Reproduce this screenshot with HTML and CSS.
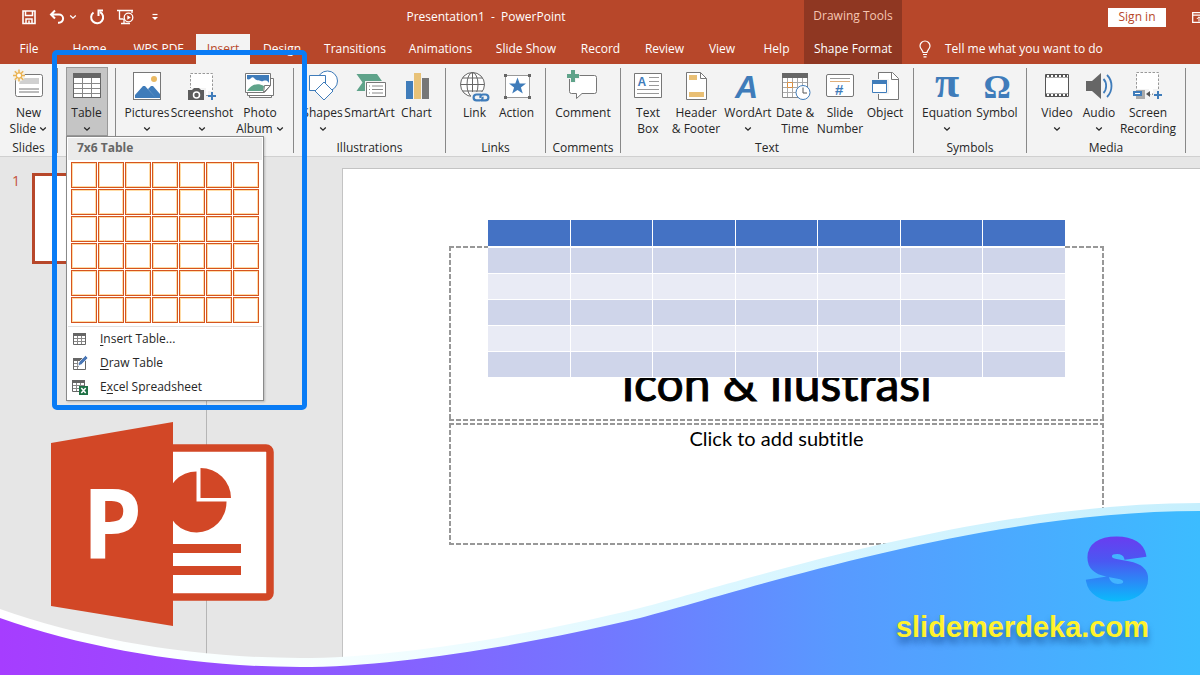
FILE: index.html
```html
<!DOCTYPE html>
<html lang="en">
<head>
<meta charset="utf-8">
<title>Presentation1 - PowerPoint</title>
<link rel="stylesheet" href="styles.css">
</head>
<body>
<svg class="defs" aria-hidden="true">
  <symbol id="chev" viewBox="0 0 8 8"><path d="M1.200 2.600 4 5.200 6.800 2.600" fill="none" stroke="currentColor" stroke-width="1.300"/></symbol>
</svg>
<div class="app">
  <header class="header">
    <div class="title-row">
      <div class="quick">
        <button class="quick-btn" aria-label="Save"><svg width="16" height="16" viewBox="0 0 16 16"><path d="M2 2h12v12.500H2z" fill="none" stroke="#fff" stroke-width="1.600"/><path d="M4.500 2v4.500h7V2M5 14v-4h6v4M8 11.500V14" fill="none" stroke="#fff" stroke-width="1.500"/></svg></button>
        <span class="quick-pair">
          <button class="quick-btn" aria-label="Undo"><svg width="16" height="16" viewBox="0 0 16 16"><path d="M6 1.500 2 5.500l4 4M2.500 5.500h7.500a4 4 0 0 1 0 8.200H9" fill="none" stroke="#fff" stroke-width="2"/></svg></button>
          <button class="quick-btn" aria-label="Undo list"><svg width="8" height="8"><use href="#chev"/></svg></button>
        </span>
        <button class="quick-btn" aria-label="Redo"><svg width="16" height="16" viewBox="0 0 16 16"><path d="M4.500 3.500A6 6 0 1 0 11 3" fill="none" stroke="#fff" stroke-width="2"/><path d="M14 1.500H9.500V7" fill="none" stroke="#fff" stroke-width="2"/></svg></button>
        <button class="quick-btn" aria-label="Start from beginning"><svg width="17" height="16" viewBox="0 0 17 16"><path d="M0 1.500h16M2.500 2v8h4M15 2v2M7 10v4M4 14.500h9" fill="none" stroke="#fff" stroke-width="1.300"/><circle cx="11.500" cy="8.500" r="4.300" fill="#b7472a" stroke="#fff" stroke-width="1.300"/><path d="m10.300 6.200 3.500 2.300-3.500 2.300z" fill="#fff"/></svg></button>
        <button class="quick-btn quick-more" aria-label="Customize toolbar"><svg width="8" height="8" viewBox="0 0 8 8"><path d="M1.500 1.500h5" stroke="#fff" stroke-width="1.200"/><path d="M1 4h6L4 7z" fill="#fff"/></svg></button>
      </div>
      <h1 class="doc-title">Presentation1&nbsp; -&nbsp; PowerPoint</h1>
      <div class="context-title">Drawing Tools</div>
      <div class="account">
        <button class="sign-in">Sign in</button>
        <button class="quick-btn window-btn" aria-label="Ribbon display options"><svg width="14" height="11" viewBox="0 0 14 11"><path d="M.700.700h12.600v9.600H.700zM.700 3.200h12.600" fill="none" stroke="#fff" stroke-width="1.300"/><path d="M7 9.500V5M4.800 7 7 4.800 9.200 7" fill="none" stroke="#fff"/></svg></button>
      </div>
    </div>
    <nav class="tabs">
      <button class="tab">File</button>
      <button class="tab">Home</button>
      <button class="tab">WPS PDF</button>
      <button class="tab tab-active">Insert</button>
      <button class="tab">Design</button>
      <button class="tab">Transitions</button>
      <button class="tab">Animations</button>
      <button class="tab">Slide Show</button>
      <button class="tab">Record</button>
      <button class="tab">Review</button>
      <button class="tab">View</button>
      <button class="tab">Help</button>
      <button class="tab tab-context">Shape Format</button>
      <button class="tab tell-me"><svg width="12" height="18" viewBox="0 0 12 18"><path d="M4 12.500C4 10 1 9 1 6a5 5 0 0 1 10 0c0 3-3 4-3 6.500zM4 14.500h4M4.500 16.800h3" fill="none" stroke="#fff" stroke-width="1.200"/></svg><span>Tell me what you want to do</span></button>
    </nav>
  </header>

  <section class="ribbon">
    <div class="group">
      <div class="tools">
        <button class="tool w-56"><svg class="icon" viewBox="0 0 32 32"><rect x="2.500" y="4.500" width="27" height="22" rx="2" fill="#fff" stroke="#777"/><path d="M8 8h18v6H6z" fill="#d0d0d0"/><path d="M6 19h20M6 22h20" stroke="#777"/><circle cx="6" cy="5.500" r="6" fill="#f4f0e6"/><path d="M6-.500v12M0 5.500h12M1.800 1.300l8.400 8.400M10.200 1.300 1.800 9.700" stroke="#eab354" stroke-width="1.500"/><circle cx="6" cy="5.500" r="2.600" fill="#fff" stroke="#eab354" stroke-width="1.200"/></svg><span>New</span><span>Slide <svg class="chev"><use href="#chev"/></svg></span></button>
      </div>
      <h2 class="group-name">Slides</h2>
    </div>
    <div class="group group-tables">
      <div class="tools">
        <button class="tool tool-open w-42"><svg class="icon" viewBox="0 0 32 32"><rect x="2.500" y="3.500" width="27" height="24" fill="#fff" stroke="#666"/><path d="M2 3h28v5H2z" fill="#666"/><path d="M11.500 8v19M20.500 8v19M3 13.500h26M3 18.500h26M3 23.500h26" stroke="#888"/></svg><span>Table</span><svg class="chev chev-row"><use href="#chev"/></svg></button>
      </div>
      <div class="menu">
        <h3 class="menu-title">7x6 Table</h3>
        <div class="picker">
          <button></button><button></button><button></button><button></button><button></button><button></button><button></button>
          <button></button><button></button><button></button><button></button><button></button><button></button><button></button>
          <button></button><button></button><button></button><button></button><button></button><button></button><button></button>
          <button></button><button></button><button></button><button></button><button></button><button></button><button></button>
          <button></button><button></button><button></button><button></button><button></button><button></button><button></button>
          <button></button><button></button><button></button><button></button><button></button><button></button><button></button>
        </div>
        <div class="menu-list">
          <button class="menu-item"><svg width="16" height="16" viewBox="0 0 16 16"><path d="M1.500 2.500h12v11h-12z" fill="#fff" stroke="#666"/><path d="M1 2h13v3H1z" fill="#666"/><path d="M5.500 5v8M9.500 5v8M2 7.500h11M2 10.500h11" stroke="#888"/></svg><span><u>I</u>nsert Table...</span></button>
          <button class="menu-item"><svg width="16" height="16" viewBox="0 0 16 16"><path d="M1.500 3.500h12v11h-12z" fill="#fff" stroke="#666"/><path d="M1 3h9v3H1z" fill="#666"/><path d="M5.500 6v8M2 8.500h5M2 11.500h5" stroke="#888"/><path d="m6 11 1-4 6.500-6.500 2.500 2.500L9.500 9.500z" fill="#4a77b5" stroke="#fff" stroke-width=".700"/></svg><span><u>D</u>raw Table</span></button>
          <button class="menu-item"><svg width="16" height="16" viewBox="0 0 16 16"><path d="M.500 1.500h12v11H.500z" fill="#fff" stroke="#666"/><path d="M0 1h13v3H0z" fill="#666"/><path d="M4.500 4v8M8.500 4v8M1 6.500h11M1 9.500h11" stroke="#888"/><path d="M7 7h9v9H7z" fill="#1e7145"/><path d="m9.300 9 4.400 5M13.700 9l-4.400 5" stroke="#fff" stroke-width="1.500"/></svg><span>E<u>x</u>cel Spreadsheet</span></button>
        </div>
      </div>
    </div>
    <div class="group">
      <div class="tools tools-images">
        <button class="tool w-54"><svg class="icon" viewBox="0 0 32 32"><rect x="2.500" y="2.500" width="27" height="27" fill="#fff" stroke="#777"/><circle cx="23" cy="9" r="3" fill="#eab962"/><path d="M4 28V25l8-9 2 0 11 12zM17 19l3-3h2l7 8v4h-4z" fill="#3f7cba"/></svg><span>Pictures</span><svg class="chev chev-row"><use href="#chev"/></svg></button>
        <button class="tool w-56"><svg class="icon" viewBox="0 0 32 32"><rect x="4.500" y="3.500" width="22" height="22" fill="#fff" stroke="#999" stroke-dasharray="2.500 1.500"/><path d="M1 18h19v13H1z" fill="#f3f3f3"/><path d="M2 20h4l2-2h5l2 2h3v10H2z" fill="#5c5c5c"/><circle cx="10.500" cy="25" r="3" fill="#5c5c5c" stroke="#fff" stroke-width="1.500"/><path d="M22 21h9v10h-9z" fill="#f3f3f3"/><path d="M26 22v8M22 26h8" stroke="#3f7cba" stroke-width="2"/></svg><span>Screenshot</span><svg class="chev chev-row"><use href="#chev"/></svg></button>
        <button class="tool w-60"><svg class="icon" viewBox="0 0 32 32"><path d="M5.500 10.500h22v17h-22z" fill="#fff" stroke="#777"/><path d="M3.500 8.500h26v17h-26z" fill="#fff" stroke="#777"/><path d="M1.500 3.500h25v12l-6 7h-19z" fill="#fff" stroke="#777"/><path d="M3 5h22v8c-3-5-6-1-8-2s-5 0-7-3-4 3-7 1z" fill="#3f7cba"/><path d="M3 21c4-6 10-9 17-5l-1 5z" fill="#5fa38a"/><path d="m19.500 22.500 1-7h6z" fill="#fff" stroke="#777"/></svg><span>Photo</span><span>Album <svg class="chev"><use href="#chev"/></svg></span></button>
      </div>
    </div>
    <div class="group">
      <div class="tools">
        <button class="tool w-44"><svg class="icon" viewBox="0 0 32 32"><circle cx="20.500" cy="11" r="10" fill="#fff" stroke="#3f7cba"/><path d="M2.500 5.500h16v15h-16z" fill="#fff" stroke="#3f7cba"/><path d="m17 12 9 9-9 9-9-9z" fill="#fff" stroke="#3f7cba"/></svg><span>Shapes</span><svg class="chev chev-row"><use href="#chev"/></svg></button>
        <button class="tool w-50"><svg class="icon" viewBox="0 0 32 32"><path d="M2.500 4H23l6 8.500L23 21H2.500l6-8.500z" fill="#5fa38a"/><path d="M11 11h22v18H11z" fill="#f3f3f3"/><path d="M12.500 12.500h19v14h-19z" fill="#fff" stroke="#777"/><path d="M15 16h1M15 19.500h1M15 23h1M18 16h11M18 19.500h11M18 23h11" stroke="#888"/></svg><span>SmartArt</span></button>
        <button class="tool w-44"><svg class="icon" viewBox="0 0 32 32"><path d="M5 11h7v18H5z" fill="#3f7cba"/><path d="M13 3h7v26h-7z" fill="#e8c278"/><path d="M21 8h7v21h-7z" fill="#777"/></svg><span>Chart</span></button>
      </div>
      <h2 class="group-name">Illustrations</h2>
    </div>
    <div class="group">
      <div class="tools">
        <button class="tool w-42"><svg class="icon" viewBox="0 0 32 32"><g fill="none" stroke="#666"><circle cx="13.500" cy="14.500" r="12" fill="#fff"/><ellipse cx="13.500" cy="14.500" rx="5.500" ry="12"/><path d="M13.500 2.500v24M1.500 14.500h24M3.500 8h20M3.500 21h20"/></g><path d="M12 22h20v10H12z" fill="#f3f3f3"/><g fill="none" stroke="#3f7cba" stroke-width="2.200"><path d="M22 24.500h-4.500a2.800 2.800 0 0 0 0 5.800H21c2 0 3-1.500 2.500-3.500"/><path d="M22 30.300h4.500a2.800 2.800 0 0 0 0-5.800H24c-2 0-3 1.500-2.500 3.500"/></g></svg><span>Link</span></button>
        <button class="tool w-42"><svg class="icon" viewBox="0 0 32 32"><path d="M4.500 5.500h24v22h-24z" fill="#fff" stroke="#999"/><path d="M3 4h3v3H3zM27 4h3v3h-3zM3 26h3v3H3zM27 26h3v3h-3z" fill="#666"/><path d="m16.500 7.500 2.200 6h6.300l-5.100 3.900 1.900 6.200-5.300-3.700-5.300 3.700 1.900-6.200L8 13.500h6.300z" fill="#3f7cba"/></svg><span>Action</span></button>
      </div>
      <h2 class="group-name">Links</h2>
    </div>
    <div class="group">
      <div class="tools">
        <button class="tool w-56"><svg class="icon" viewBox="0 0 32 32"><path d="M4.500 5.500h23a2 2 0 0 1 2 2v14a2 2 0 0 1-2 2H15L9.500 28.500v-5h-5a2 2 0 0 1-2-2v-14a2 2 0 0 1 2-2z" fill="#fff" stroke="#777"/><path d="M6-.500v13M-.500 6h13" stroke="#f3f3f3" stroke-width="6"/><path d="M6 0v12M0 6h12" stroke="#5fa38a" stroke-width="4"/></svg><span>Comment</span></button>
      </div>
      <h2 class="group-name">Comments</h2>
    </div>
    <div class="group">
      <div class="tools">
        <button class="tool w-42"><svg class="icon" viewBox="0 0 32 32"><path d="M2.500 3.500h27v24h-27z" fill="#fff" stroke="#777"/><text x="5.500" y="16" class="glyph glyph-a">A</text><path d="M17 7.500h10M17 11.500h10M17 15.500h10M5 19.500h22M5 23.500h22" stroke="#999"/></svg><span>Text</span><span>Box</span></button>
        <button class="tool w-54"><svg class="icon" viewBox="0 0 32 32"><path d="M6.500 2.500h14l6 6v21h-20z" fill="#fff" stroke="#777"/><path d="M20.500 2.500v6h6" fill="none" stroke="#777"/><path d="M9 5h8v5H9zM9 22h15v5H9z" fill="#e9bf74"/></svg><span>Header</span><span>&amp; Footer</span></button>
        <button class="tool w-50"><svg class="icon" viewBox="0 0 32 32"><text x="3" y="28" class="glyph glyph-art">A</text></svg><span>WordArt</span><svg class="chev chev-row"><use href="#chev"/></svg></button>
        <button class="tool w-44"><svg class="icon" viewBox="0 0 32 32"><path d="M3.500 3.500h25v24h-25z" fill="#fff" stroke="#888"/><path d="M3 3h26v5H3z" fill="#666"/><path d="M8.500 8v19M13.500 8v19M18.500 8v19M23.500 8v19M4 12.500h24M4 17.500h24M4 22.500h24" stroke="#aaa"/><path d="M8.500 12.500h5v5h-5z" fill="#fff" stroke="#d98d3d"/><circle cx="24" cy="22.500" r="7" fill="#fff" stroke="#3f7cba"/><path d="M24 17.500v5.500h4" fill="none" stroke="#555"/></svg><span>Date &amp;</span><span>Time</span></button>
        <button class="tool w-46"><svg class="icon" viewBox="0 0 32 32"><rect x="2.500" y="4.500" width="27" height="22" rx="1.500" fill="#fff" stroke="#777"/><path d="M6 8.500h20" stroke="#999"/><path d="M6 11.500h20" stroke="#dfae7a"/><text x="11" y="25" class="glyph glyph-hash">#</text></svg><span>Slide</span><span>Number</span></button>
        <button class="tool w-44"><svg class="icon" viewBox="0 0 32 32"><path d="M9.500 2.500h14l6 6v21h-20z" fill="#fff" stroke="#777"/><path d="M22.500 2.500v7h7" fill="none" stroke="#777"/><path d="M2 9h18v15H2z" fill="#f3f3f3"/><path d="M3.500 11.500h14v11h-14z" fill="#fff" stroke="#3f7cba"/><path d="M3 10h15v4H3z" fill="#3f7cba"/></svg><span>Object</span></button>
      </div>
      <h2 class="group-name">Text</h2>
    </div>
    <div class="group">
      <div class="tools">
        <button class="tool w-54"><svg class="icon" viewBox="0 0 32 32"><text x="16" y="27" class="glyph glyph-serif">π</text></svg><span>Equation</span><svg class="chev chev-row"><use href="#chev"/></svg></button>
        <button class="tool w-46"><svg class="icon" viewBox="0 0 32 32"><text x="16" y="28" class="glyph glyph-omega">Ω</text></svg><span>Symbol</span></button>
      </div>
      <h2 class="group-name">Symbols</h2>
    </div>
    <div class="group">
      <div class="tools">
        <button class="tool w-42"><svg class="icon" viewBox="0 0 32 32"><path d="M4.500 4.500h23v22h-23z" fill="#fff" stroke="#555"/><path d="M5 6h22M5 25h22" stroke="#555" stroke-width="3"/><path d="M6 6h21M6 25h21" stroke="#fff" stroke-width="2" stroke-dasharray="2 2"/></svg><span>Video</span><svg class="chev chev-row"><use href="#chev"/></svg></button>
        <button class="tool w-42"><svg class="icon" viewBox="0 0 32 32"><path d="M3 11h6l9-8v26l-9-8H3z" fill="#666"/><path d="M20.500 9c3.500 3.500 3.500 10.500 0 14M24 5c6 6 6 16 0 22" fill="none" stroke="#3f7cba" stroke-width="1.800"/></svg><span>Audio</span><svg class="chev chev-row"><use href="#chev"/></svg></button>
        <button class="tool w-56"><svg class="icon" viewBox="0 0 32 32"><path d="M4.500 2.500h22v22h-22z" fill="#fff" stroke="#999" stroke-dasharray="2.500 1.500"/><path d="M1 19h16v12H1z" fill="#f3f3f3"/><path d="M4 20h9v9H4z" fill="#aaa"/><path d="M1 21h9v5H1z" fill="#3f7cba"/><path d="M3 23.500h5" stroke="#fff"/><path d="m14 24 4-3v6z" fill="#555"/><path d="M20 24h2" stroke="#888"/><path d="M21 19h10v11H21z" fill="#f3f3f3"/><path d="M26 21v8M22 25h8" stroke="#3f7cba" stroke-width="2"/></svg><span>Screen</span><span>Recording</span></button>
      </div>
      <h2 class="group-name">Media</h2>
    </div>
  </section>

  <main class="workspace">
    <aside class="thumbs">
      <span class="thumb-number">1</span>
      <div class="thumb"></div>
    </aside>
    <div class="stage">
      <article class="slide">
        <div class="holder holder-title">Icon &amp; Ilustrasi</div>
        <div class="holder holder-sub">Click to add subtitle</div>
        <table class="slide-table">
          <thead><tr><th></th><th></th><th></th><th></th><th></th><th></th><th></th></tr></thead>
          <tbody>
            <tr><td></td><td></td><td></td><td></td><td></td><td></td><td></td></tr>
            <tr><td></td><td></td><td></td><td></td><td></td><td></td><td></td></tr>
            <tr><td></td><td></td><td></td><td></td><td></td><td></td><td></td></tr>
            <tr><td></td><td></td><td></td><td></td><td></td><td></td><td></td></tr>
            <tr><td></td><td></td><td></td><td></td><td></td><td></td><td></td></tr>
          </tbody>
        </table>
      </article>
    </div>
  </main>

  <div class="highlight"></div>
  <svg class="logo" viewBox="0 0 224 206" role="img" aria-label="PowerPoint">
    <rect x="100" y="26" width="119" height="149" rx="4" fill="#fff" stroke="#d24726" stroke-width="7.500"/>
    <path d="M145.500 49.500v30h30a30 30.500 0 1 1-30-30z" fill="#d24726"/>
    <path d="M149.500 46a30.500 30 0 0 1 30.500 30h-30.500z" fill="#d24726"/>
    <path d="M120 122h70v9h-70zM120 144h70v9h-70z" fill="#d24726"/>
    <path d="M0 21 122 0v204L0 184z" fill="#d24726"/>
    <text x="31" y="137" class="logo-letter">P</text>
  </svg>
  <svg class="wave" viewBox="0 0 1200 175" preserveAspectRatio="none" aria-hidden="true">
    <defs>
      <linearGradient id="band"><stop offset="0" stop-color="#fff"/><stop offset=".25" stop-color="#f8ffff"/><stop offset=".6" stop-color="#dcf7ff"/><stop offset="1" stop-color="#c6effd"/></linearGradient>
      <linearGradient id="fill"><stop offset="0" stop-color="#a63dff"/><stop offset=".14" stop-color="#9c48ff"/><stop offset=".28" stop-color="#8c5aff"/><stop offset=".5" stop-color="#7377ff"/><stop offset=".7" stop-color="#589aff"/><stop offset="1" stop-color="#3cbcff"/></linearGradient>
    </defs>
    <path d="M0 109C90 141 200 158 300 158C400 158 540 133 640 108C740 82 980 3 1200 3V175H0z" fill="url(#band)"/>
    <path d="M0 118C90 150 200 167 300 167C400 167 540 142 640 118C740 92 980 11 1200 11V175H0z" fill="url(#fill)"/>
  </svg>
  <div class="brand">
    <svg class="brand-mark" viewBox="0 0 64 64">
      <defs><linearGradient id="mark" gradientUnits="userSpaceOnUse" x1="0" y1="0" x2="0" y2="64"><stop offset="0" stop-color="#6a3cf0"/><stop offset=".4" stop-color="#4a58f2"/><stop offset="1" stop-color="#0cb8fb"/></linearGradient></defs>
      <text x="32" y="63" class="brand-letter" fill="url(#mark)" stroke="url(#mark)">s</text>
    </svg>
    <span class="brand-name">slidemerdeka.com</span>
  </div>
</div>
</body>
</html>
```
FILE: styles.css
```css
* { box-sizing: border-box; }

body {
  margin: 0;
  font: 12px/16px "Open Sans", "Noto Sans", sans-serif;
  color: #262626;
  background: #e6e6e6;
}

button {
  margin: 0;
  padding: 0;
  border: 0;
  background: none;
  color: inherit;
  font: inherit;
}

h1, h2, h3 { margin: 0; font-size: 12px; font-weight: 400; }

.defs { position: absolute; width: 0; height: 0; }

.app {
  position: relative;
  display: flex;
  flex-direction: column;
  min-height: 100vh;
  overflow: hidden;
}

/* Header */
.header { background: #b7472a; color: #fff; }

.title-row { display: grid; grid-template-columns: 168px 636px 98px 1fr; height: 34px; }

.quick { display: flex; align-items: center; gap: 12px; padding-left: 21px; }
.quick-pair { display: flex; align-items: center; gap: 4px; }
.quick-btn { display: flex; justify-content: center; }
.quick-more { width: 18px; }

.doc-title { align-self: center; text-align: center; }

.context-title { background: #8f3722; color: #f6c6b2; text-align: center; line-height: 32px; }

.account { display: flex; align-items: center; justify-content: flex-end; gap: 26px; overflow: hidden; }
.sign-in { width: 58px; height: 19px; background: #fff; color: #b7472a; }
.window-btn { margin-right: -6px; }

.tabs {
  display: grid;
  grid-template-columns: 58px 63px 75px 54px 64px 82px 89px 82px 67px 61px 54px 55px 98px 1fr;
  height: 30px;
}
.tab { white-space: nowrap; }
.tab-active { background: #f3f3f3; color: #b7472a; }
.tab-context { background: #8f3722; }
.tell-me { display: flex; align-items: center; gap: 14px; padding-left: 17px; }

/* Ribbon */
.ribbon {
  display: grid;
  grid-template-columns: 58px 58px 178px 152px 100px 75px 293px 113px 159px;
  padding: 4px 0 3px;
  background: #f3f3f3;
  border-bottom: 1px solid #d0d0d0;
}

.group { display: flex; flex-direction: column; height: 85px; border-right: 1px solid #888; }
.group-tables { position: relative; z-index: 2; }

.tools { display: flex; justify-content: center; height: 75px; }
.tools-images { justify-content: flex-start; padding-left: 4px; }
.group-name { text-align: center; line-height: 10px; color: #262626; }

.tool {
  display: flex;
  flex-direction: column;
  align-items: center;
  padding-top: 2px;
  height: 68px;
  white-space: nowrap;
}
.tool-open { margin-top: -1px; padding-top: 3px; height: 69px; background: #c5c5c5; box-shadow: inset 0 0 0 1px #999; }

.w-42 { width: 42px; }
.w-44 { width: 44px; }
.w-46 { width: 46px; }
.w-50 { width: 50px; }
.w-54 { width: 54px; }
.w-56 { width: 56px; }
.w-60 { width: 60px; }

.icon { width: 32px; height: 32px; margin-bottom: 3px; overflow: visible; flex: none; }
.chev { width: 8px; height: 8px; }
.chev-row { margin-top: 4px; }

.glyph { fill: #3f7cba; }
.glyph-a { font: 700 12px "Liberation Sans", sans-serif; }
.glyph-art { font: italic 700 32px "Liberation Sans", sans-serif; }
.glyph-hash { font: 700 15px "Liberation Sans", sans-serif; }
.glyph-serif { font: 700 44px "Liberation Serif", serif; text-anchor: middle; }
.glyph-omega { font: 700 34px "Liberation Serif", serif; text-anchor: middle; }

/* Table menu */
.menu {
  position: absolute;
  top: 68px;
  left: 8px;
  width: 198px;
  padding: 1px;
  background: #fff;
  border: 1px solid #8a8a8a;
  box-shadow: 1px 1px 2px #0003;
}
.menu-title { padding: 2px 9px 4px; background: #ebebeb; color: #666; font-weight: 700; }
.picker { display: grid; grid-template-columns: repeat(7, 26px); grid-auto-rows: 26px; gap: 1px; padding: 2px 3px 3px; }
.picker button { border: 1px solid #d6541f; box-shadow: inset 0 0 0 1px #ffdca6; background: #fff; }
.menu-list { border-top: 1px solid #e1e1e1; }
.menu-item { display: flex; align-items: center; gap: 12px; width: 100%; height: 24px; padding-left: 4px; }
.menu-item u { text-underline-offset: 2px; }

/* Workspace */
.workspace { flex: 1; display: grid; grid-template-columns: 207px 1fr; }

.thumbs { display: grid; grid-template-columns: 32px 1fr; align-items: start; padding-top: 16px; border-right: 1px solid #b5b5b5; }
.thumb-number { padding-left: 12px; color: #c4513a; font-size: 14px; }
.thumb { height: 91px; margin-right: 14px; border: 3px solid #b7472a; background: #fff; }

.stage { display: flex; padding: 11px 0 0 135px; }
.slide {
  position: relative;
  flex: 1;
  padding: 77px 96px 0 106px;
  background: #fff;
  border: 1px solid #c3c3c3;
  border-right: 0;
  color: #000;
  font-family: Lato, "Open Sans", sans-serif;
  text-align: center;
}

/* Dashed outline: 5px dash, 2px gap on each edge */
.holder {
  --dash: #989898 0 5px, #fff 5px 7px;
  background:
    repeating-linear-gradient(90deg, var(--dash)) top / 100% 2px no-repeat,
    repeating-linear-gradient(90deg, var(--dash)) bottom / 100% 2px no-repeat,
    repeating-linear-gradient(var(--dash)) left / 2px 100% no-repeat,
    repeating-linear-gradient(var(--dash)) right / 2px 100% no-repeat;
}
.holder-title {
  display: flex;
  align-items: flex-end;
  justify-content: center;
  height: 175px;
  padding-bottom: 12px;
  font-size: 48px;
  line-height: 52px;
  -webkit-text-stroke: 1px #000;
}
.holder-sub { height: 122px; margin-top: 2px; padding-top: 3px; font-size: 20px; line-height: 24px; font-variant-ligatures: none; }

.slide-table {
  position: absolute;
  top: 51px;
  left: 145px;
  width: calc(100% - 280px);
  table-layout: fixed;
  border-collapse: collapse;
}
.slide-table th, .slide-table td { padding: 0; border: 1px solid #fff; border-width: 0 1px 1px 0; }
.slide-table tr > :last-child { border-right: 0; }
.slide-table th { height: 27px; background: #4472c4; border-bottom-width: 2px; }
.slide-table td { height: 26px; background: #cfd5ea; }
.slide-table tr:nth-child(even) td { background: #e9ebf5; }

/* Overlays */
.highlight { position: absolute; z-index: 3; top: 50px; left: 52px; width: 255px; height: 360px; border: 5px solid #0a7cf5; border-radius: 5px; pointer-events: none; }

.logo { position: absolute; left: 51px; top: 422px; width: 224px; height: 206px; }
.logo-letter { font: 700 96px "Open Sans", sans-serif; fill: #fff; }

.wave { position: absolute; left: 0; bottom: 0; width: 100%; height: 175px; }

.brand { position: absolute; right: 51px; bottom: 28px; display: flex; flex-direction: column; align-items: flex-end; gap: 7px; }
.brand-mark { width: 64px; height: 64px; overflow: visible; }
.brand-letter { font: 900 110px Inter, sans-serif; text-anchor: middle; stroke-width: 3px; }
.brand-name { font: 700 29px/40px "Liberation Sans", sans-serif; color: #fff22d; text-shadow: 0 6px 6px #0a3c8299; }
```
